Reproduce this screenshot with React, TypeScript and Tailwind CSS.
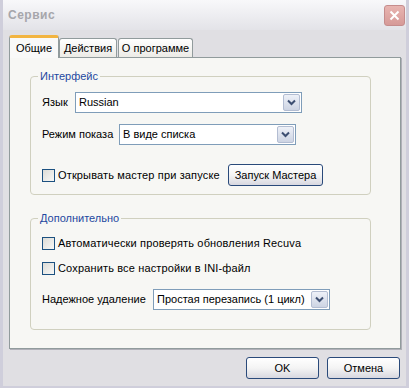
import React from "react";

const font = { fontFamily: '"Liberation Sans", Arial, sans-serif' };

function Chevron() {
  return (
    <svg width="9" height="7" viewBox="0 0 9 7">
      <path d="M1 1.5 L4.5 5 L8 1.5" stroke="#3d4f72" strokeWidth="2" fill="none" />
    </svg>
  );
}

function Select({ text, width }: { text: string; width: number }) {
  return (
    <div
      className="h-[21px] flex items-stretch border border-[#7f9db9] bg-white"
      style={{ width }}
    >
      <div className="flex-1 flex items-center pl-[3px] text-[11px] text-black whitespace-nowrap">{text}</div>
      <div className="w-[17px] m-[1px] flex items-center justify-center border border-[#b3bdd2] rounded-[2px] bg-gradient-to-b from-[#eef1f8] to-[#cdd4e3]">
        <Chevron />
      </div>
    </div>
  );
}

function Checkbox({ label }: { label: string }) {
  return (
    <div className="flex items-center h-[21px]">
      <span className="w-[13px] h-[13px] border border-[#1c5180] bg-gradient-to-br from-[#dcdcd7] to-[#f8f8f6]" />
      <span className="ml-[3px] text-[11px] tracking-[0.15px] text-black whitespace-nowrap">{label}</span>
    </div>
  );
}

function Button({ label, w }: { label: string; w: number }) {
  return (
    <div
      className="h-[22px] flex items-center justify-center rounded-[3px] border border-[#2a4a7a] bg-gradient-to-b from-[#ffffff] via-[#f4f4f4] to-[#d8d8e0] text-[11px] text-black whitespace-nowrap"
      style={{ width: w }}
    >
      {label}
    </div>
  );
}

function Group({ title, children, className }: { title: string; children: React.ReactNode; className?: string }) {
  return (
    <div className={"relative w-[341px] border border-[#d0d0bf] rounded-[4px] " + (className || "")}>
      <span className="absolute left-[7px] top-[-9px] px-[2px] bg-[#f7f7f4] text-[11px] leading-[16px] text-[#1e48a0] whitespace-nowrap">
        {title}
      </span>
      {children}
    </div>
  );
}

export default function App() {
  return (
    <div
      style={font}
      className="w-[409px] h-[388px] bg-[#e0dfe3] flex flex-col border-x-[3px] border-b-[2px] border-[#cfcedb]"
    >
      <div className="h-[30px] flex items-center justify-between pl-[5px] pr-[1px] bg-gradient-to-b from-[#f8f8fa] to-[#e3e3e8]">
        <span className="text-[12px] font-bold tracking-[0.5px] text-[#a6a6ab]">Сервис</span>
        <div className="w-[21px] h-[21px] rounded-[3px] border border-[#c58c8c] bg-gradient-to-b from-[#e8b4b0] to-[#d69a98] flex items-center justify-center">
          <svg width="11" height="11" viewBox="0 0 11 11">
            <path d="M1.5 1.5 L9.5 9.5 M9.5 1.5 L1.5 9.5" stroke="#ffffff" strokeWidth="2" />
          </svg>
        </div>
      </div>

      <div className="pl-[6px] pr-[5px] pt-[5px]">
        <div className="flex items-end h-[22px] relative z-10">
          <div className="w-[50px] h-[23px] mb-[-1px] bg-[#f9f9f8] border-x border-[#919b9c] border-t-[3px] border-t-[#f2b440] rounded-t-[3px] flex items-center justify-center text-[11px] text-black whitespace-nowrap">
            Общие
          </div>
          <div className="w-[58px] h-[19px] bg-gradient-to-b from-[#ffffff] to-[#ecebe6] border border-b-0 border-[#919b9c] rounded-t-[3px] flex items-center justify-center text-[11px] text-black whitespace-nowrap">
            Действия
          </div>
          <div className="ml-[1px] w-[75px] h-[19px] bg-gradient-to-b from-[#ffffff] to-[#ecebe6] border border-b-0 border-[#919b9c] rounded-t-[3px] flex items-center justify-center text-[11px] text-black whitespace-nowrap">
            О программе
          </div>
        </div>
        <div className="h-[292px] w-[392px] bg-[#f7f7f4] border border-[#919b9c] shadow-[1px_1px_0_#b0b0b8] pl-[20px] pt-[18px]">
          <Group title="Интерфейс" className="h-[119px] pl-[11px] pt-[15px]">
            <div className="flex items-center h-[21px]">
              <span className="text-[11px] text-black w-[33px] whitespace-nowrap">Язык</span>
              <Select text="Russian" width={227} />
            </div>
            <div className="flex items-center h-[21px] mt-[11px]">
              <span className="text-[11px] text-black w-[77px] whitespace-nowrap">Режим показа</span>
              <Select text="В виде списка" width={177} />
            </div>
            <div className="flex items-center justify-between h-[22px] mt-[19px] pr-[47px]">
              <Checkbox label="Открывать мастер при запуске" />
              <Button label="Запуск Мастера" w={95} />
            </div>
          </Group>

          <Group title="Дополнительно" className="h-[112px] mt-[23px] pl-[11px] pt-[14px]">
            <Checkbox label="Автоматически проверять обновления Recuva" />
            <div className="mt-[4px]">
              <Checkbox label="Сохранить все настройки в INI-файл" />
            </div>
            <div className="flex items-center h-[21px] mt-[10px]">
              <span className="text-[11px] text-black w-[111px] whitespace-nowrap">Надежное удаление</span>
              <Select text="Простая перезапись (1 цикл)" width={177} />
            </div>
          </Group>
        </div>
      </div>

      <div className="flex justify-end gap-[8px] pr-[6px] mt-[8px]">
        <Button label="OK" w={73} />
        <Button label="Отмена" w={73} />
      </div>
    </div>
  );
}
